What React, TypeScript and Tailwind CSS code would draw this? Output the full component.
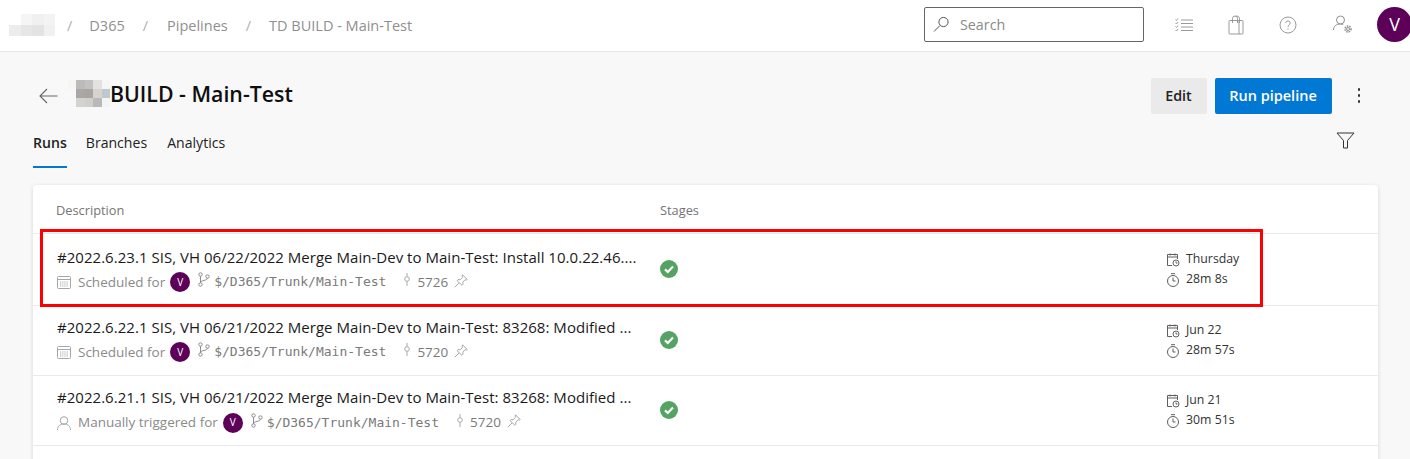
import React from "react";

type Run = {
  title: string;
  trigger: string;
  manual?: boolean;
  commit: string;
  when: string;
  duration: string;
};

const runs: Run[] = [
  {
    title: "#2022.6.23.1 SIS, VH 06/22/2022 Merge Main-Dev to Main-Test: Install 10.0.22.46....",
    trigger: "Scheduled for",
    commit: "5726",
    when: "Thursday",
    duration: "28m 8s",
  },
  {
    title: "#2022.6.22.1 SIS, VH 06/21/2022 Merge Main-Dev to Main-Test: 83268: Modified ...",
    trigger: "Scheduled for",
    commit: "5720",
    when: "Jun 22",
    duration: "28m 57s",
  },
  {
    title: "#2022.6.21.1 SIS, VH 06/21/2022 Merge Main-Dev to Main-Test: 83268: Modified ...",
    trigger: "Manually triggered for",
    manual: true,
    commit: "5720",
    when: "Jun 21",
    duration: "30m 51s",
  },
];

const orgBlur = [
  ["#ffffff", "#f5f5f5", "#f0f0f0", "#f3f3f3"],
  ["#ececec", "#e6e6e6", "#e3e3e3", "#f0f0f0"],
];

const titleBlur = [
  ["#f7f5f1", "#bdbbb9", "#c4c2c1", "#e4e2e0", "#f6f6f6"],
  ["#f8f8f8", "#aaa7a6", "#a9a5a3", "#d9d3cd", "#bdc8d0"],
  ["#f8f8f8", "#d5d3cf", "#d2cfcb", "#b9b9b9", "#f3f4f5"],
];

function Avatar({ size }: { size: "sm" | "lg" }) {
  return (
    <div
      className={
        size === "lg"
          ? "flex size-[35px] items-center justify-center rounded-full bg-[#5c0058] text-[18px] text-white"
          : "flex size-5 items-center justify-center rounded-full bg-[#5c0058] text-[10px] text-white"
      }
    >
      V
    </div>
  );
}

function Calendar() {
  return (
    <svg width="16" height="16" viewBox="0 0 16 16" fill="none" stroke="#a6a6a6" className="-ml-px shrink-0">
      <rect x="1.5" y="2.5" width="13" height="12" rx="1" />
      <path d="M1.5 5.5h13" />
      <path d="M4 8h8M4 10h8M4 12h8" strokeDasharray="1.2 1" />
    </svg>
  );
}

function Person() {
  return (
    <svg width="16" height="16" viewBox="0 0 16 16" fill="none" stroke="#a6a6a6" className="-ml-px shrink-0">
      <circle cx="8" cy="5.5" r="3.8" />
      <path d="M1.5 15c0-4 2.8-6 6.5-6s6.5 2 6.5 6" />
    </svg>
  );
}

function BranchIcon() {
  return (
    <svg width="14" height="16" viewBox="0 0 14 16" fill="none" stroke="#8c8c8c" className="shrink-0">
      <circle cx="3.5" cy="2.5" r="1.7" />
      <circle cx="3.5" cy="12.5" r="1.7" />
      <circle cx="10.5" cy="4.5" r="1.7" />
      <path d="M3.5 4.2v6.6M10.5 6.2c0 2.6-7 1.8-7 4.6" />
    </svg>
  );
}

function CommitIcon() {
  return (
    <svg width="8" height="16" viewBox="0 0 8 16" fill="none" stroke="#a9a9a9" className="shrink-0">
      <circle cx="4" cy="7" r="2.3" />
      <path d="M4 1v3.7M4 9.3V14" />
    </svg>
  );
}

function PinIcon() {
  return (
    <svg width="14" height="14" viewBox="0 0 14 14" fill="none" stroke="#a6a6a6" className="shrink-0">
      <path d="M8.5.8l4.7 4.7-1 .6-1-.4-2.4 2.4.1 2.2-1 1L3 6.6l1-1 2.2.1 2.4-2.4-.4-1z" strokeLinejoin="round" />
      <path d="M5 9L.8 13.2" />
    </svg>
  );
}

function CalendarClock() {
  return (
    <svg width="14" height="14" viewBox="0 0 14 14" fill="none" stroke="#5f5f5f" className="shrink-0">
      <path d="M6 12.5H1.5v-11h10V6" />
      <path d="M1.5 4h10M4 .5v2M9 .5v2" />
      <circle cx="10" cy="10" r="3" fill="white" />
      <path d="M10 8.5V10h1.5" />
    </svg>
  );
}

function Stopwatch() {
  return (
    <svg width="14" height="14" viewBox="0 0 14 14" fill="none" stroke="#5f5f5f" className="shrink-0">
      <circle cx="7" cy="8" r="5.5" />
      <path d="M5 .7h4M7 4.5V8h2.5" />
    </svg>
  );
}

function SuccessIcon() {
  return (
    <svg width="18" height="18" viewBox="0 0 18 18" className="shrink-0">
      <circle cx="9" cy="9" r="9" fill="#55a362" />
      <path d="M5 9.4l2.8 2.6L13 6.6" fill="none" stroke="white" strokeWidth="2.2" />
    </svg>
  );
}

function RunRow({ run, first }: { run: Run; first: boolean }) {
  return (
    <div className={first ? "flex h-[72px] items-center border-t border-[#eaeaea] pl-6" : "flex h-[70px] items-center border-t border-[#eaeaea] pb-[2px] pl-6"}>
      <div className="w-[603px] shrink-0">
        <div className="whitespace-nowrap text-[15px] leading-5 tracking-[0.03px] text-[#1a1a1a]">{run.title}</div>
        <div className={run.manual ? "mt-[6px] flex h-5 items-center whitespace-nowrap text-[13.5px] text-[#8a8a8a]" : "mt-[5px] flex h-5 items-center whitespace-nowrap text-[13.5px] text-[#8a8a8a]"}>
          {run.manual ? <Person /> : <Calendar />}
          <span className="ml-[6px]">{run.trigger}</span>
          <div className="ml-[5px]">
            <Avatar size="sm" />
          </div>
          <div className="mb-1 ml-[7px]">
            <BranchIcon />
          </div>
          <span className="ml-[3px] font-['DejaVu_Sans_Mono',monospace] text-[13px] text-[#7a7a7a]">$/D365/Trunk/Main-Test</span>
          <div className="mb-1 ml-[17px]">
            <CommitIcon />
          </div>
          <span className="ml-[6px] text-[#7a7a7a]">{run.commit}</span>
          <div className="mb-[3px] ml-[6px]">
            <PinIcon />
          </div>
        </div>
      </div>
      <div className={first ? "w-[504px] shrink-0 pb-[2px]" : "w-[504px] shrink-0"}>
        <SuccessIcon />
      </div>
      <div className={first ? "flex flex-col gap-[3px] pl-[2px] text-[12.3px] text-[#333333]" : "flex flex-col gap-[3px] pl-[2px] pt-[2px] text-[12.3px] text-[#333333]"}>
        <div className="flex h-[17px] items-center gap-[6px]">
          <CalendarClock />
          <span>{run.when}</span>
        </div>
        <div className="flex h-[17px] items-center gap-[6px]">
          <Stopwatch />
          <span>{run.duration}</span>
        </div>
      </div>
    </div>
  );
}

export default function App() {
  return (
    <div className="h-[459px] w-[1410px] overflow-hidden bg-[#f8f8f8] font-['Open_Sans',sans-serif]">
      {/* Top bar */}
      <div className="flex h-[52px] items-center border-b border-[#e6e6e6] bg-white pb-[2px] pl-[9px]">
        <div className="grid w-[46px] grid-cols-4">
          {orgBlur.flat().map((c, i) => (
            <div key={i} className="h-[11px]" style={{ backgroundColor: c }} />
          ))}
        </div>
        <div className="flex items-center pt-[2px] text-[14.5px] text-[#8f8f8f]">
          <span className="ml-[12px] text-[#b0b0b0]">/</span>
          <span className="ml-[17px]">D365</span>
          <span className="ml-[18px] text-[#b0b0b0]">/</span>
          <span className="ml-[19px]">Pipelines</span>
          <span className="ml-[18px] text-[#b0b0b0]">/</span>
          <span className="ml-[18px]">TD BUILD - Main-Test</span>
        </div>
        <div className="-mr-[2px] ml-auto flex items-center">
          <div className="flex h-[35px] w-[220px] shrink-0 items-center rounded-[2px] border border-[#666666] pl-[8px] text-[14.3px] text-[#8a8a8a]">
            <svg width="17" height="17" viewBox="0 0 17 17" fill="none" stroke="#555555">
              <circle cx="10.5" cy="6" r="4.6" />
              <path d="M7 9.5L1 15.5" />
            </svg>
            <span className="ml-[10px]">Search</span>
          </div>
          <svg className="ml-[31px] shrink-0" width="18" height="16" viewBox="0 0 18 16" fill="none" stroke="#9a9a9a">
            <path d="M6 3h12M6 6.5h12M6 10h12M6 13.5h12" />
            <path d="M0.5 2.5l1 1 1.5-2M0.5 6l1 1 1.5-2M0.5 9.5l1 1 1.5-2M0.5 13l1 1 1.5-2" />
          </svg>
          <svg className="ml-[35px] shrink-0" width="16" height="20" viewBox="0 0 16 20" fill="none" stroke="#9a9a9a">
            <rect x="1" y="5.5" width="14" height="13.5" rx="1" />
            <path d="M4.5 8V3.5a2.5 2.5 0 0 1 5 0V8M7.5 1.5a2.5 2.5 0 0 1 4 2V8M11 5.5v13.5" />
          </svg>
          <svg className="ml-[35px] shrink-0" width="18" height="18" viewBox="0 0 18 18" fill="none" stroke="#9a9a9a">
            <circle cx="9" cy="9" r="8" />
            <path d="M6.8 7a2.2 2.2 0 1 1 3.3 2c-.8.5-1.1 1-1.1 2M9 12.5v1.2" />
          </svg>
          <svg className="ml-[36px] shrink-0" width="20" height="19" viewBox="0 0 20 19" fill="none" stroke="#8f8f8f">
            <circle cx="7.5" cy="5" r="4" />
            <path d="M0.5 15c0-3.500 2.500-6 7-6 1 0 2 .2 2.700.5" />
            <circle cx="15" cy="14" r="1.5" />
            <circle cx="15" cy="14" r="3" strokeDasharray="1.5 1" strokeWidth="1.5" />
          </svg>
          <div className="ml-[24px] shrink-0">
            <Avatar size="lg" />
          </div>
        </div>
      </div>

      {/* Page heading */}
      <div className="flex h-[62px] items-center pl-[39px] pr-[50px] pt-[25px]">
        <svg width="19" height="16" viewBox="0 0 19 16" fill="none" stroke="#666666" strokeWidth="1.1">
          <path d="M18.5 8H1M8 1L1 8l7 7" />
        </svg>
        <div className="mb-[5px] ml-[10px] grid w-[42px] shrink-0 grid-cols-5">
          {titleBlur.flat().map((c, i) => (
            <div key={i} className="h-[9px]" style={{ backgroundColor: c }} />
          ))}
        </div>
        <h1 className="mb-[4px] text-[21.3px] font-semibold leading-none text-[#0f0f0f]">BUILD - Main-Test</h1>
        <div className="ml-auto flex h-9 w-14 items-center justify-center rounded-[2px] bg-[#eaeaea] text-[14.3px] font-semibold text-[#222222]">
          Edit
        </div>
        <div className="ml-2 flex h-9 w-[117px] items-center justify-center rounded-[2px] bg-[#0078d4] text-[14.5px] font-semibold text-white">
          Run pipeline
        </div>
        <div className="ml-[26px] flex flex-col gap-[3.5px]">
          <div className="size-[2.5px] rounded-full bg-[#333333]" />
          <div className="size-[2.5px] rounded-full bg-[#333333]" />
          <div className="size-[2.5px] rounded-full bg-[#333333]" />
        </div>
      </div>

      {/* Tabs */}
      <div className="mt-[13px] flex h-[41px] items-start pl-[33px] pr-[55px] text-[14.1px] text-[#222222]">
        <div className="flex h-[41px] flex-col items-center justify-between pt-[6px]">
          <span className="font-semibold leading-5">Runs</span>
          <div className="h-[2px] w-full bg-[#0078d4]" />
        </div>
        <span className="ml-[19px] pt-[6px] leading-5">Branches</span>
        <span className="ml-[20px] pt-[6px] leading-5">Analytics</span>
        <svg className="ml-auto mt-[5px]" width="19" height="17" viewBox="0 0 19 17" fill="none" stroke="#333333">
          <path d="M1 1h17l-6.5 7.5V16h-4V8.5z" />
        </svg>
      </div>

      {/* Runs table */}
      <div className="relative ml-[33px] mt-[17px] h-[300px] w-[1345px] rounded-t-[4px] bg-white shadow-[0_1px_4px_rgba(0,0,0,0.14)]">
        <div className="flex h-[48px] items-center pl-[23px] pt-[4px] text-[12.8px] font-medium text-[#757575]">
          <span className="w-[604px]">Description</span>
          <span>Stages</span>
        </div>
        {runs.map((run, i) => (
          <RunRow key={run.title} run={run} first={i === 0} />
        ))}
        <div className="border-t border-[#eaeaea]" />
        {/* Red annotation drawn over the first row */}
        <div className="absolute left-[7px] top-[44px] h-[78px] w-[1223px] border-[3px] border-[#ff0000]" />
      </div>
    </div>
  );
}
